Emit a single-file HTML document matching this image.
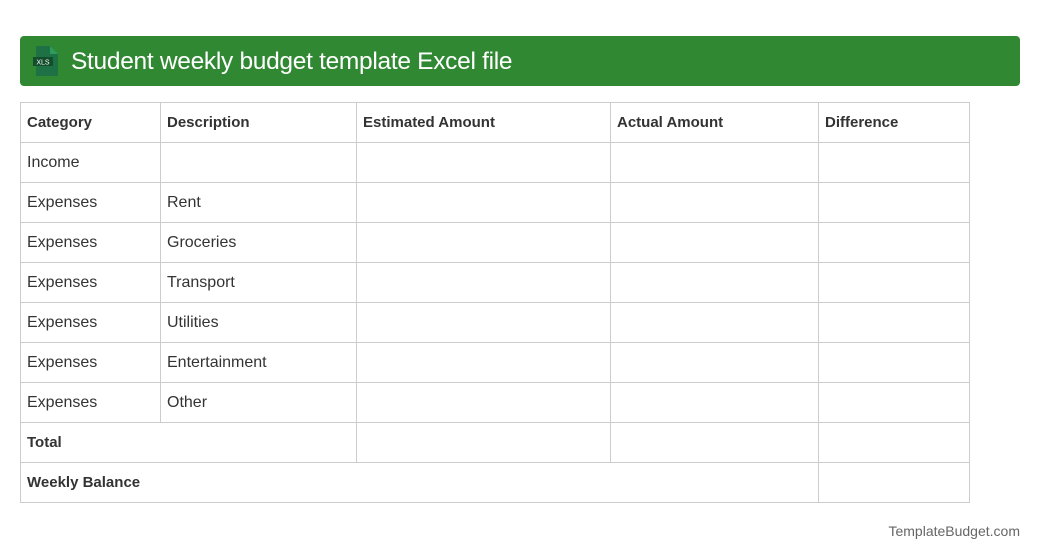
<!DOCTYPE html>
<html><head><style>
body{margin:0;background:#fff;width:1040px;height:560px;position:relative;font-family:"Liberation Sans",Arial,sans-serif;color:#333}
.hdr{position:absolute;left:20px;top:36px;width:1000px;height:50px;background:#318833;border-radius:4px}
.hdr span{position:absolute;left:51px;top:12px;font-size:24.5px;color:#fff;letter-spacing:-0.3px}
table{position:absolute;left:20px;top:102px;border-collapse:collapse;font-size:16px}
td{border:1px solid #ccc;height:40px;padding:1px 0 0 6px;box-sizing:border-box}
b{font-weight:bold;font-size:15px}
.ft{position:absolute;right:20px;top:523px;font-size:14px;color:#666}
</style></head><body>
<div class="hdr">
<svg style="position:absolute;left:13px;top:10px" width="26" height="30" viewBox="0 0 26 30">
<path d="M3 0H17L25 8V30H3Z" fill="#1e7145"/><path d="M17 0V8H25Z" fill="#2d9b5e"/>
<rect x="0" y="11" width="20" height="9" fill="#124d2c"/>
<text x="10" y="18.5" font-size="7" fill="#fff" text-anchor="middle" font-family="Liberation Sans">XLS</text>
</svg>
<span>Student weekly budget template Excel file</span></div>
<table>
<colgroup><col style="width:140px"><col style="width:196px"><col style="width:254px"><col style="width:208px"><col style="width:151px"></colgroup>
<tr><td><b>Category</b></td><td><b>Description</b></td><td><b>Estimated Amount</b></td><td><b>Actual Amount</b></td><td><b>Difference</b></td></tr>
<tr><td>Income</td><td></td><td></td><td></td><td></td></tr>
<tr><td>Expenses</td><td>Rent</td><td></td><td></td><td></td></tr>
<tr><td>Expenses</td><td>Groceries</td><td></td><td></td><td></td></tr>
<tr><td>Expenses</td><td>Transport</td><td></td><td></td><td></td></tr>
<tr><td>Expenses</td><td>Utilities</td><td></td><td></td><td></td></tr>
<tr><td>Expenses</td><td>Entertainment</td><td></td><td></td><td></td></tr>
<tr><td>Expenses</td><td>Other</td><td></td><td></td><td></td></tr>
<tr><td colspan="2"><b>Total</b></td><td></td><td></td><td></td></tr>
<tr><td colspan="4"><b>Weekly Balance</b></td><td></td></tr>
</table>
<div class="ft">TemplateBudget.com</div>
</body></html>
